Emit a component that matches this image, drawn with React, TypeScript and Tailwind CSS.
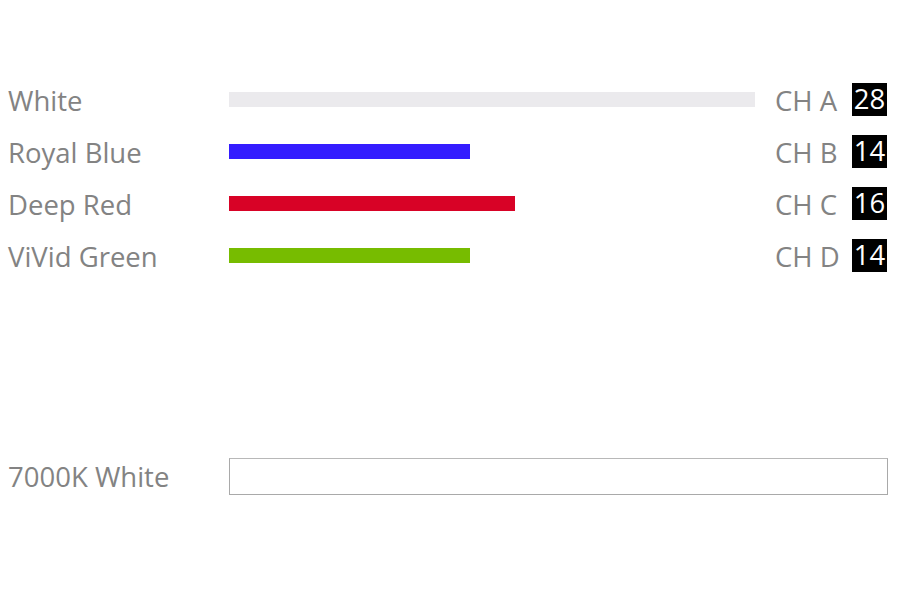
const channels = [
  { label: 'White', ch: 'CH A', value: 28, width: 526, color: 'bg-[#ebeaed]' },
  { label: 'Royal Blue', ch: 'CH B', value: 14, width: 241, color: 'bg-[#341cff]' },
  { label: 'Deep Red', ch: 'CH C', value: 16, width: 286, color: 'bg-[#d80226]' },
  { label: 'ViVid Green', ch: 'CH D', value: 14, width: 241, color: 'bg-[#77bc00]' },
];

export default function App() {
  return (
    <div className="w-[900px] h-[600px] bg-white text-[#838383] font-['Open_Sans',sans-serif] overflow-hidden">
      <div className="pt-[73px]">
        {channels.map((c) => (
          <div key={c.ch} className="flex items-center h-[52px]">
            <div className="w-[229px] pl-2 pt-[3px] text-[27.5px] leading-none">{c.label}</div>
            <div className="w-[526px] h-[15px]">
              <div className={`h-full ${c.color}`} style={{ width: c.width }} />
            </div>
            <div className="w-[77px] ml-5 pt-[3px] text-[27.5px] leading-none">{c.ch}</div>
            <div className="w-[35px] h-[33px] bg-black text-white text-[27.5px] leading-none flex items-center justify-center">
              {c.value}
            </div>
          </div>
        ))}
      </div>
      <div className="flex items-center mt-[177px]">
        <div className="w-[229px] pl-2 text-[27.5px] leading-none">7000K White</div>
        <div className="w-[659px] h-[37px] border border-[#a9a9a9] border-t-[#b8b8b8] bg-white" />
      </div>
    </div>
  );
}
